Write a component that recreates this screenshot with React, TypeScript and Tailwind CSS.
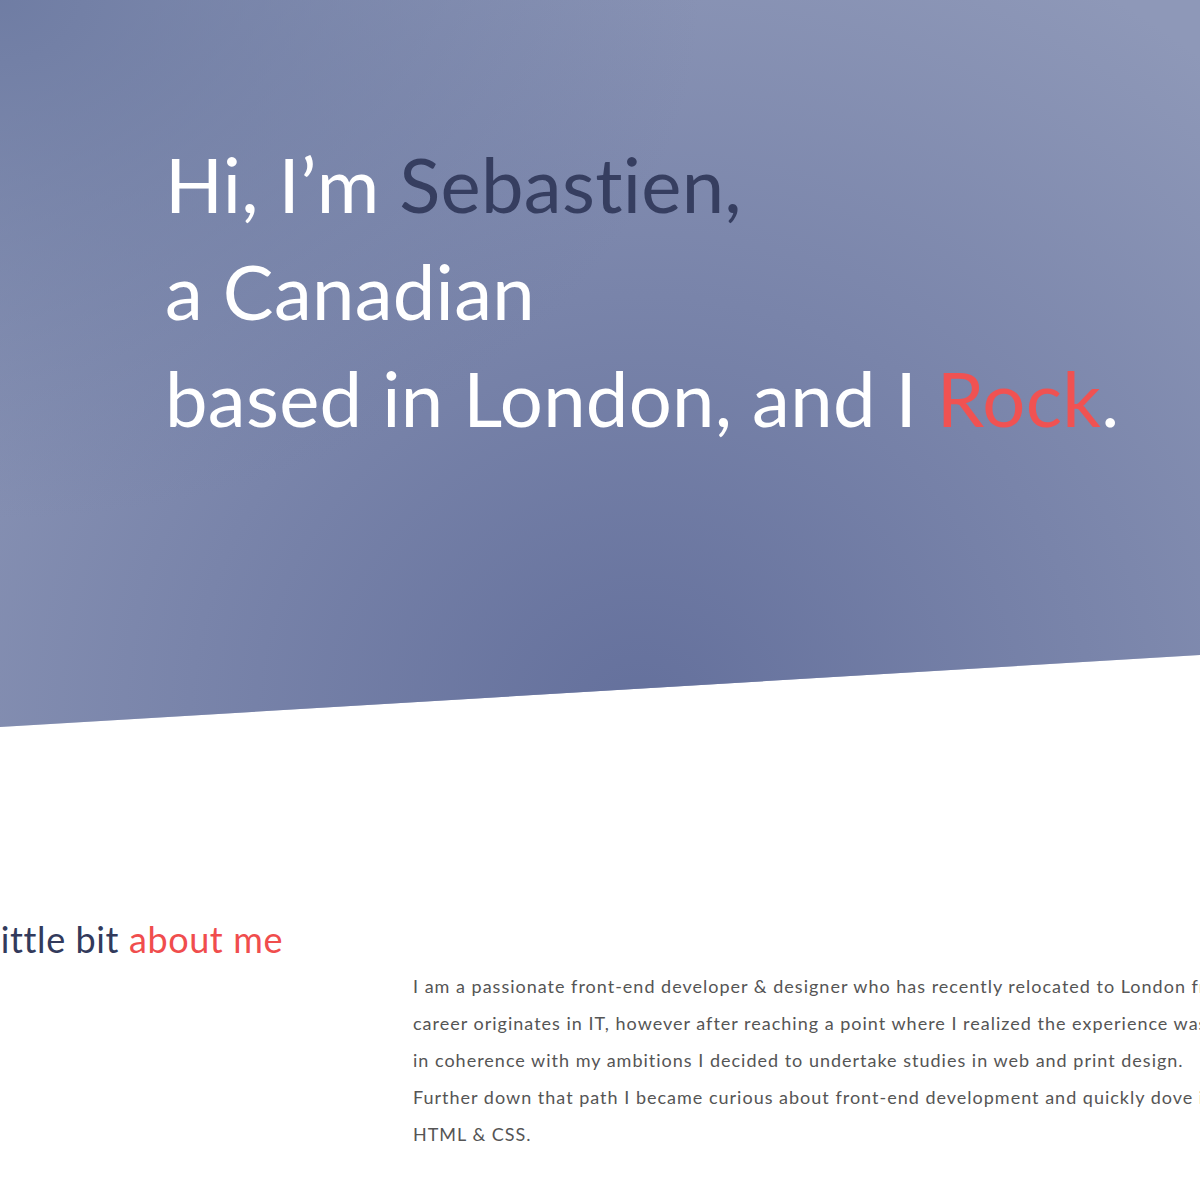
export default function App() {
  return (
    <div className="w-[1200px] h-[1200px] overflow-hidden bg-white font-['Lato',sans-serif] [font-variant-ligatures:none]">
      {/* Hero */}
      <section className="relative h-[727px] [clip-path:polygon(0_0,100%_0,100%_655px,0_727px)] bg-[radial-gradient(ellipse_700px_520px_at_0px_0px,rgba(106,120,160,0.85),rgba(106,120,160,0)),radial-gradient(ellipse_900px_850px_at_640px_720px,#64709c,rgba(100,112,156,0)),linear-gradient(#8e98b8,#8e98b8)]">
        <h1 className="pl-[165px] pt-[130px] text-[76px] leading-[107px] font-normal tracking-[0.3px] text-white">
          <span className="block">
            Hi, I’m <span className="text-[#363e60]">Sebastien,</span>
          </span>
          <span className="block">a Canadian</span>
          <span className="block">
            based in London, and I <span className="text-[#f05252]">Rock</span>.
          </span>
        </h1>
      </section>

      {/* About */}
      <section className="flex pt-[190px]">
        <div className="w-[283px] shrink-0 flex justify-end">
          <h2 className="whitespace-nowrap text-[36px] leading-[44px] tracking-[0.6px] text-[#323a5c]">
            A little bit <span className="text-[#f04d4d]">about me</span>
          </h2>
        </div>
        <div className="pl-[130px] pt-[51px] text-[18px] leading-[37px] tracking-[1px] text-[#555] whitespace-nowrap">
          <p>I am a passionate front-end developer &amp; designer who has recently relocated to London from Montreal. My</p>
          <p>career originates in IT, however after reaching a point where I realized the experience wasn’t</p>
          <p>in coherence with my ambitions I decided to undertake studies in web and print design.</p>
          <p>Further down that path I became curious about front-end development and quickly dove into</p>
          <p>HTML &amp; CSS.</p>
        </div>
      </section>
    </div>
  );
}
